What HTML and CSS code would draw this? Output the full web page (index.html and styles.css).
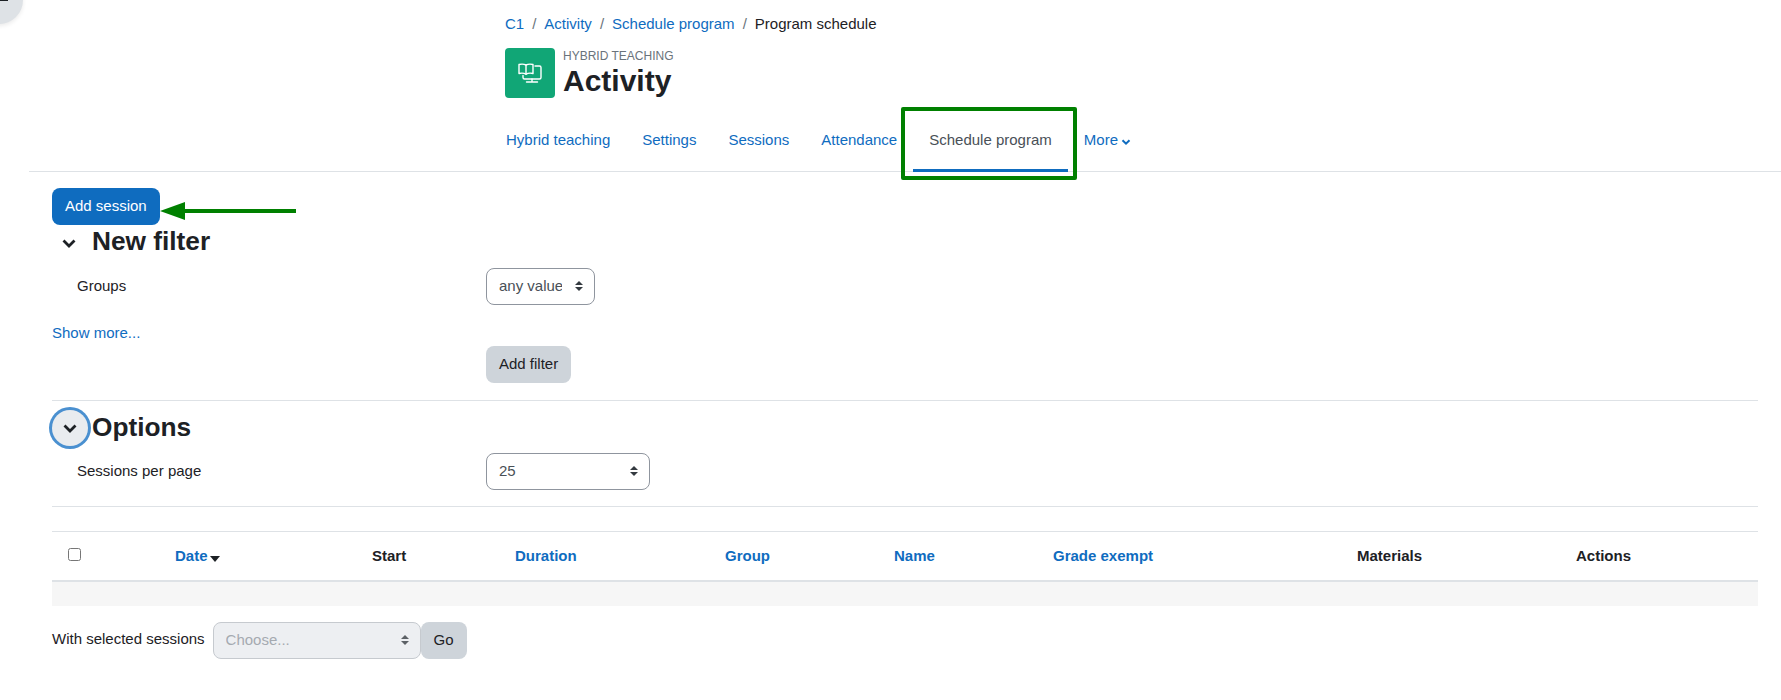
FILE: index.html
```html
<!DOCTYPE html>
<html lang="en">
<head>
<meta charset="utf-8">
<title>Program schedule</title>
<link rel="stylesheet" href="styles.css">
</head>
<body>
<button class="drawer-toggle" type="button" aria-label="Open index"><span class="drawer-dash"></span></button>
<header class="page-head">
  <nav class="crumbs">
    <a href="#">C1</a><span class="sep">/</span><a href="#">Activity</a><span class="sep">/</span><a href="#">Schedule program</a><span class="sep">/</span><span>Program schedule</span>
  </nav>
  <div class="title-row">
    <div class="mod-icon">
      <svg width="24" height="24" viewBox="0 0 24 24" fill="none" stroke="#fff" stroke-width="1.4" stroke-linejoin="round" stroke-linecap="round">
        <path d="M8 4 C6 3 3 3 1 3.5 V12.5 C3 12 6 12 8 13.2 C10 12 13 12 15 12.5 V3.5 C13 3 10 3 8 4 Z"/>
        <path d="M8 4 V13.2"/>
        <path d="M17 5 H21.5 Q23 5 23 6.5 V16.5 Q23 18 21.5 18 H6.5 Q5 18 5 16.5 V14.5"/>
        <path d="M14 18 V21 M8.5 21 H19.5"/>
      </svg>
    </div>
    <div class="title-text">
      <div class="mod-type">HYBRID TEACHING</div>
      <h1 class="mod-name">Activity</h1>
    </div>
  </div>
</header>
<nav class="tabs">
  <a class="tab" href="#">Hybrid teaching</a>
  <a class="tab" href="#">Settings</a>
  <a class="tab" href="#">Sessions</a>
  <a class="tab" href="#">Attendance</a>
  <a class="tab active" href="#">Schedule program<span class="callout-box"></span></a>
  <a class="tab" href="#">More<svg class="more-chev" width="10" height="10" viewBox="0 0 10 10" fill="none" stroke="currentColor" stroke-width="2"><path d="M1.5 3.2 L5 6.7 L8.5 3.2"/></svg></a>
</nav>
<main class="content">
  <div class="action-row">
    <button class="btn btn-primary" type="button">Add session</button>
    <svg class="callout-arrow" width="136" height="18" viewBox="0 0 136 18"><path d="M0 9 L25 0 V7 H136 V11 H25 V18 Z" fill="#008000"/></svg>
  </div>

  <section class="fieldset fieldset-filter">
    <h3 class="legend">
      <span class="chev-box"><svg width="14" height="14" viewBox="0 0 14 14" fill="none" stroke="#1d2125" stroke-width="2.8"><path d="M1.5 4.5 L7 10 L12.5 4.5"/></svg></span>
      New filter
    </h3>
    <div class="form-row row-groups">
      <label class="form-label">Groups</label>
      <select class="select select-groups"><option>any value</option></select>
    </div>
    <a class="show-more" href="#">Show more...</a>
    <div class="form-row row-btn">
      <span class="form-label"></span>
      <button class="btn btn-secondary" type="button">Add filter</button>
    </div>
  </section>

  <section class="fieldset fieldset-options">
    <h3 class="legend">
      <span class="chev-box focused"><svg width="14" height="14" viewBox="0 0 14 14" fill="none" stroke="#1d2125" stroke-width="2.8"><path d="M1.5 4.5 L7 10 L12.5 4.5"/></svg></span>
      Options
    </h3>
    <div class="form-row row-perpage">
      <label class="form-label">Sessions per page</label>
      <select class="select select-perpage"><option>25</option></select>
    </div>
  </section>

  <div class="table">
    <div class="thead">
      <div class="th"><input class="check" type="checkbox"></div>
      <div class="th"><a href="#">Date</a><svg class="sort" width="10" height="6" viewBox="0 0 10 6"><path d="M0 0 H10 L5 6 Z" fill="#1d2125"/></svg></div>
      <div class="th">Start</div>
      <div class="th"><a href="#">Duration</a></div>
      <div class="th"><a href="#">Group</a></div>
      <div class="th"><a href="#">Name</a></div>
      <div class="th"><a href="#">Grade exempt</a></div>
      <div class="th">Materials</div>
      <div class="th">Actions</div>
    </div>
    <div class="empty-row"></div>
  </div>

  <div class="bulk-row">
    <label class="bulk-label">With selected sessions</label>
    <select class="select select-bulk" disabled><option>Choose...</option></select>
    <button class="btn btn-secondary btn-go" type="button">Go</button>
  </div>
</main>
</body>
</html>
```
FILE: styles.css
```css
* { box-sizing: border-box; }
html, body { margin: 0; padding: 0; }
body {
  font-family: "Liberation Sans", Arial, sans-serif;
  font-size: 15px;
  line-height: 22.5px;
  color: #1d2125;
  background: #fff;
  height: 700px;
  overflow: hidden;
  position: relative;
}
a { color: #0f6cbf; text-decoration: none; }

.drawer-toggle {
  position: absolute;
  left: -25px;
  top: -24px;
  width: 48px;
  height: 48px;
  border: 0;
  padding: 0;
  border-radius: 50%;
  background: #dee2e6;
  box-shadow: 0 2px 4px rgba(0,0,0,.08);
}
.drawer-dash {
  position: absolute;
  left: 25px;
  top: 24px;
  width: 8px;
  height: 1px;
  background: #1d2125;
}

.page-head { padding: 13px 0 0 505px; }
.crumbs { display: flex; height: 22px; }
.sep { padding: 0 8px; color: #6a737b; }
.title-row { display: flex; margin-top: 13px; gap: 8px; }
.mod-icon {
  width: 50px;
  height: 50px;
  border-radius: 4px;
  background: #11a676;
  display: flex;
  align-items: center;
  justify-content: center;
}
.mod-type { font-size: 12px; line-height: 14px; color: #6a737b; margin-top: 1px; }
.mod-name { font-size: 30px; line-height: 36px; font-weight: 700; margin: 0; }

.tabs {
  display: flex;
  margin-top: 9px;
  height: 64px;
  border-bottom: 1px solid #dee2e6;
  margin-left: 29px;
  padding-left: 477px;
}
.tab {
  display: flex;
  align-items: center;
  height: 64px;
  padding: 1px 16px 0;
  position: relative;
  flex: none;
}
.tab:first-child { padding-left: 0; }
.tab.active { color: #495057; box-shadow: inset 0 -3px 0 #0f6cbf; }
.callout-box {
  position: absolute;
  left: -12px;
  right: -9px;
  top: -1px;
  bottom: -8px;
  border: 4px solid #008000;
  border-radius: 2px;
  pointer-events: none;
}
.more-chev { margin-left: 3px; margin-top: 2px; }

.content { padding: 16px 23px 0 52px; }
.action-row { display: flex; align-items: center; height: 36.5px; }
.btn {
  font-family: inherit;
  font-size: 15px;
  line-height: 22.5px;
  height: 36.5px;
  padding: 0 13px;
  border: 0;
  border-radius: 8px;
}
.btn-primary { background: #0f6cbf; color: #fff; }
.btn-secondary { background: #ced4da; color: #1d2125; }
.callout-arrow { display: block; margin-top: 10px; }

.legend {
  display: flex;
  align-items: center;
  font-size: 26.25px;
  line-height: 30px;
  font-weight: 700;
  margin: 0;
  height: 30px;
}
.chev-box {
  width: 36px;
  height: 36px;
  margin-right: 4px;
  border-radius: 50%;
  flex: none;
  display: flex;
  align-items: center;
  justify-content: center;
  padding-top: 4px;
}
.chev-box svg { margin-left: -2px; }
.chev-box.focused {
  background: #e9ecef;
  box-shadow: 0 0 0 3px #4a90d0;
  padding-top: 0;
  margin-top: 2px;
}
.chev-box.focused svg { margin-left: 0; }

.form-row { display: flex; align-items: center; }
.form-label { width: 434px; padding-left: 25px; flex: none; }
.select {
  appearance: none;
  -webkit-appearance: none;
  font-family: inherit;
  font-size: 15px;
  line-height: 22.5px;
  height: 36.5px;
  padding: 0 32px 0 12px;
  color: #495057;
  border: 1px solid #8f959e;
  border-radius: 8px;
  background: #fff url("data:image/svg+xml,%3Csvg xmlns='http://www.w3.org/2000/svg' width='10' height='12' viewBox='0 0 10 12'%3E%3Cpath d='M5 1 L9 5 H1 Z M5 11 L1 7 H9 Z' fill='%23343a40'/%3E%3C/svg%3E") no-repeat right 10px center;
}
.select-groups { width: 109px; }
.select-perpage { width: 164px; }
.row-groups { margin-top: 12.5px; }
.show-more { display: block; margin-top: 17px; }
.row-btn { padding-top: 2px; }
.fieldset { border-bottom: 1px solid #dee2e6; }
.fieldset-filter { padding-top: 1px; padding-bottom: 17.5px; }
.fieldset-options { padding-top: 10.5px; padding-bottom: 16.5px; }
.row-perpage { margin-top: 11.5px; }

.table { margin-top: 24px; border-top: 1px solid #dee2e6; }
.thead {
  display: grid;
  grid-template-columns: 123px 197px 143px 210px 169px 159px 304px 219px 1fr;
  align-items: center;
  height: 50px;
  border-bottom: 2px solid #dee2e6;
  font-weight: 700;
}
.th:first-child { padding-left: 16px; display: flex; }
.check { margin: -3px 0 0; width: 13px; height: 13px; }
.sort { margin-left: 2px; vertical-align: -1px; }
.empty-row { height: 24px; background: #f6f6f6; }

.bulk-row { display: flex; align-items: center; margin-top: 16px; }
.bulk-label { margin-right: 8px; padding-bottom: 2px; }
.select-bulk {
  width: 208px;
  background-color: #e9ecef;
  color: #8f959e;
  border-color: #b8bdc4;
  opacity: .8;
}
.btn-go { padding: 0 12px; width: 46px; }
```
